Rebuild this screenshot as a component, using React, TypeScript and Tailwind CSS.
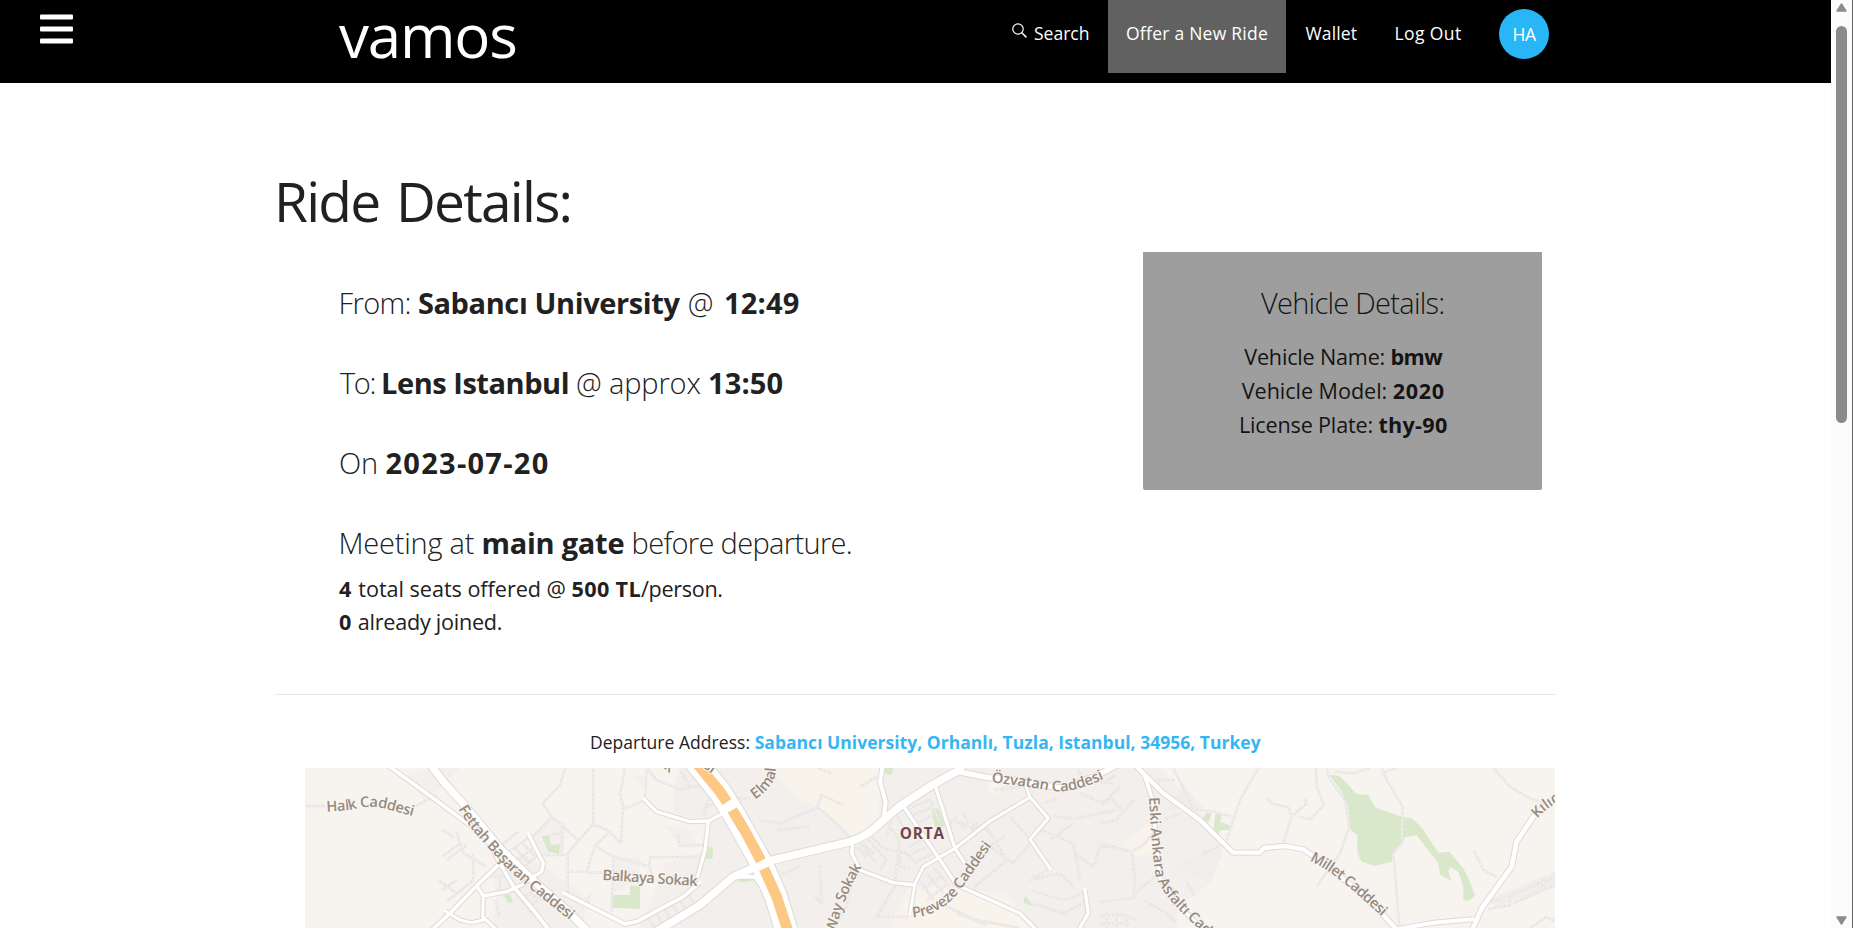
import type { ReactNode } from "react";

type Road = { x: number; d: string; w: number };

const roads: Road[] = [
  { x: 0, w: 22, d: "M385,125 L430,185 L485,245 L600,385 L700,482 L800,570 L870,640" },
  { x: 0, w: 11, d: "M255,130 L400,235 L500,308 L555,350 L580,390 L600,430 L640,500 L700,570 L755,640" },
  { x: 0, w: 11, d: "M600,430 L530,497 L450,580 L385,640" },
  { x: 0, w: 10, d: "M530,497 L550,528 L620,515 L665,495 L690,477 L725,455 L730,430 L685,342" },
  { x: 0, w: 9, d: "M550,530 L548,590 L600,640" },
  { x: 0, w: 9, d: "M435,573 L480,600 L515,608 L550,600" },
  { x: 0, w: 10, d: "M1033,238 L1070,275 L1170,305 L1225,303 L1260,285 L1300,262" },
  { x: 0, w: 10, d: "M1225,305 L1215,390 L1192,472" },
  { x: 0, w: 11, d: "M793,520 L975,612 L1010,605 L1150,530 L1200,488" },
  { x: 1200, w: 23, d: "M-140,640 L0,555 L100,470 L210,422 L450,365 Q500,350 545,305 L600,258 L700,193 L775,152 L800,120" },
  { x: 1200, w: 16, d: "M775,155 L860,172 L960,182 L1090,206 L1195,165 L1260,130" },
  { x: 1200, w: 66, d: "M-30,105 L60,215 L97,275 L185,430 L228,530 L262,640" },
  { x: 1200, w: 12, d: "M100,470 L165,470 L200,520 L240,640" },
  { x: 1200, w: 12, d: "M550,125 L540,185 L557,245 L550,300" },
  { x: 1200, w: 10, d: "M458,372 L455,400 L480,450 L580,488 L645,495" },
  { x: 1200, w: 10, d: "M608,255 L720,420 L770,495 L850,530 L960,580 L1020,640" },
  { x: 1200, w: 10, d: "M705,195 L765,385 L795,430" },
  { x: 1200, w: 9, d: "M630,580 L645,490 L670,440 L765,385 L870,303 L990,232 L975,190" },
  { x: 1200, w: 9, d: "M990,232 L1045,295 L990,358 L1050,445" },
  { x: 1200, w: 10, d: "M1155,510 L1165,580 L1130,640" },
  { x: 2400, w: 13, d: "M95,125 L190,220 L300,300 L398,397 L478,398 L492,384 L555,378 L610,388 L640,408 L760,500 L850,585 L900,640" },
  { x: 2400, w: 11, d: "M135,170 L158,240 L165,330 L178,470 L220,540 L330,650" },
  { x: 2400, w: 12, d: "M890,628 L1000,608 L1118,598" },
  { x: 2400, w: 14, d: "M1112,640 L1145,565 L1235,440 L1250,365 L1300,290 L1380,220" },
];

const lanes: { x: number; d: string }[] = [
  { x: 0, d: "M15,258 H75 M430,190 L470,240 M340,262 L410,225 M795,144 L780,195 L728,250 L755,290 L690,360 M755,290 L835,362 L880,312 V144 M835,362 L800,405 H725 M785,310 V402 M752,342 H784 M803,405 L803,520" },
  { x: 0, d: "M880,312 L930,335 L962,370 L970,260 L960,225 L975,144 M975,265 L1035,240 M930,335 L885,378 L940,410 L1048,440 M885,378 L860,455 L805,455 M862,458 H1000 M940,410 L935,575 M1048,440 L1050,412 L1210,410 M1135,340 L1138,378 L1215,375" },
  { x: 0, d: "M1040,144 L1035,235 M1040,144 L1070,180 L1140,208 L1200,195 M1140,150 L1170,200 M1210,290 L1225,240 L1260,225 M1048,440 L1060,480 M870,520 L860,560" },
  { x: 0, d: "M427,330 L460,352 M470,335 L490,400 L560,440 M427,410 L480,370 M440,420 L500,375 M415,480 L470,520 M425,510 L470,480 M440,545 L520,480 L520,400 M600,380 L655,335 M620,400 L690,350 M640,430 L705,380 M660,450 L720,400 M560,470 H600 V520" },
  { x: 0, d: "M640,380 L690,430 M665,365 L705,410 M680,520 L735,540 M660,540 L720,500 M690,560 L740,520 M640,510 L700,585 M585,540 L600,590 M1040,590 L1065,624 M1065,575 L1095,624 M1090,560 L1120,610 M1115,550 L1145,600 M1140,540 L1165,580 M1165,525 L1190,560" },
  { x: 1200, d: "M10,270 L60,235 L150,235 M350,144 L395,160 M480,200 L530,170 M180,300 L240,310 L355,262 L420,320 L455,360 M350,262 L365,225 L430,255 M230,330 L330,320 M240,465 L300,440 M345,530 L365,550 L360,430" },
  { x: 1200, d: "M500,355 L560,420 L540,450 M510,345 L550,385 L620,400 L650,430 M480,370 L530,430 M560,310 L600,360 L585,480 M575,300 L560,350 M590,285 L620,340 L680,320 M615,270 L690,240 L720,310 M625,290 L695,262 M640,315 L700,285 M625,380 L680,350 M635,400 L695,375 M650,425 L710,395 M600,400 L600,440 L630,445" },
  { x: 1200, d: "M680,460 L730,520 M660,480 L700,540 M700,440 L750,500 M720,420 L760,470 M665,510 L720,470 M680,540 L745,490 M770,290 L740,330 M790,280 L830,350 M750,300 L860,330 L880,350 M780,320 L840,310 M470,380 L500,410 M490,370 L520,400 M460,470 L440,560 L400,624 M590,490 L530,590 H630" },
  { x: 1200, d: "M860,320 L920,420 L820,505 M930,290 L985,350 M870,380 L940,430 L990,370 M830,400 L915,350 M1050,445 L990,480 L1080,460 L1120,500 M1000,320 L1120,370 L1140,480 M990,510 L1090,540 L1150,520 M1000,550 L1090,580 L1150,550 M1050,360 L1120,310 M1060,290 L1130,295 L1250,270" },
  { x: 1200, d: "M1130,144 L1150,180 L1240,190 M1140,220 L1210,250 L1260,200 M1120,400 L1180,440 L1200,380 H1250 M740,560 L830,600 L960,624 M770,580 L860,615 M1030,250 L1070,235 M880,210 L970,200" },
  { x: 2400, d: "M0,245 L40,240 L65,270 M0,310 L50,300 L100,240 M0,372 L95,395 L130,375 L160,340 M95,395 L105,480 L100,535 L0,545 M105,520 L165,470 M165,180 H225 M220,144 L280,268 M475,144 L420,240 L380,360 M280,268 L340,275 L398,290" },
  { x: 2400, d: "M500,232 L515,250 L565,262 L575,290 L550,370 M575,290 L620,250 L615,235 M595,290 L630,298 L672,255 L650,200 L648,144 M680,144 L690,180 L735,240 L748,320 L720,400 L650,500 M305,405 L370,370 M260,485 L285,530 M190,300 L240,280" },
  { x: 2400, d: "M700,155 L760,160 L810,144 M845,144 L860,180 L908,260 L905,370 L880,400 L898,620 M845,160 L890,144 M1120,390 L1150,450 L1190,470 M1180,144 L1230,200 L1290,235 L1330,250 M1165,548 L1230,530 L1230,555 L1165,568 M1200,540 L1365,470 M1240,550 L1365,495 M1330,470 V510 M1290,624 L1340,590 L1365,605" },
  { x: 2400, d: "M0,585 H70 L110,600 M0,610 H90 M20,570 V624 M50,575 V624 M80,590 V624 M130,540 L200,580 L225,605 M20,185 L45,165 M215,500 L240,560" },
];

const greens: { x: number; d: string }[] = [
  { x: 0, d: "M725,348 L748,345 L752,375 L780,372 L778,402 L745,395Z M990,497 H1020 V567 L937,563 L940,525 H990Z M612,525 L630,522 L638,545 L625,550Z M1220,382 H1238 V415 L1217,418Z M1155,520 L1172,515 L1170,530 L1152,535Z" },
  { x: 1200, d: "M555,144 H580 L575,165 L555,162Z M695,270 L715,265 L735,320 L705,322Z M975,525 L1000,558 L970,548Z M95,475 L155,468 L165,480 L130,487Z" },
  { x: 2400, d: "M688,164 L718,168 L740,190 L770,222 L805,225 L825,262 L905,290 L935,295 L965,322 L1015,398 L1048,395 L1090,445 L1110,485 L1125,527 L1105,543 L1090,540 L1090,500 L1075,455 L1050,440 L1045,455 L1055,483 L1020,465 L1015,430 L950,346 L915,352 L905,372 L880,400 L875,425 L825,438 L785,425 L772,400 V345 L752,330 L745,260 L725,215Z" },
  { x: 2400, d: "M318,278 L335,280 L325,308 L305,300Z M347,280 L365,285 L360,305 L395,318 L385,330 L362,330 L354,345 L340,330Z" },
];

const labels: { id: string; x: number; d: string; text: string; len?: number; size?: number }[] = [
  { id: "halk", x: 0, d: "M80,275 L150,270 Q215,252 262,268 L360,294", text: "Halk Caddesi", len: 263 },
  { id: "fettah", x: 0, d: "M475,266 C520,345 570,385 600,423 S740,545 840,625", text: "Fettah Başaran Caddesi", len: 476 },
  { id: "balkaya", x: 0, d: "M907,480 Q1050,489 1230,500", text: "Balkaya Sokak", len: 286 },
  { id: "cut1", x: 0, d: "M1090,144 L1130,176", text: "k" },
  { id: "cut2", x: 0, d: "M1208,142 L1260,180", text: "si" },
  { id: "elmali", x: 1200, d: "M165,238 Q215,205 226,165 L232,100", text: "Elmalı", len: 130 },
  { id: "ozvatan", x: 1200, d: "M874,188 C940,193 990,202 1040,210 C1110,225 1170,195 1240,165", text: "Özvatan Caddesi", len: 346 },
  { id: "way", x: 1200, d: "M408,640 C420,560 455,490 500,415", text: "Way Sokak", len: 216 },
  { id: "preveze", x: 1200, d: "M638,592 C705,590 760,545 792,495 L895,350", text: "Preveze Caddesi", len: 334 },
  { id: "eski", x: 2400, d: "M147,232 C152,330 158,400 166,465 C195,545 270,600 400,720", text: "Eski Ankara Asfaltı Caddesi", len: 560 },
  { id: "millet", x: 2400, d: "M628,422 C690,448 760,510 865,608", text: "Millet Caddesi", len: 276 },
  { id: "kilic", x: 2400, d: "M1312,296 Q1350,250 1440,215", text: "Kılıç Sokak" },
];

function StreetMap() {
  return (
    <svg className="block h-[160px] w-[1250px]" viewBox="15 144 3750 480" preserveAspectRatio="none">
      <rect x="15" y="144" width="3750" height="480" fill="#f7f4ef" />
      <g fill="#f3efed">
        <path d="M1140,144 L1520,144 L1560,215 L1520,240 L1660,355 L1730,310 L1750,144 L2580,144 L2690,265 L2770,370 L2720,500 L2630,560 L2640,640 L2200,640 L2120,520 L1960,510 L1830,500 L1760,640 L1010,640 L1100,430 L1220,390 L1230,305 L1120,280 L1120,210 Z" />
        <path d="M325,170 L380,144 L480,144 L415,210 L370,240Z M690,350 L755,290 L800,310 L790,400 L725,400Z M580,440 L670,400 L860,530 L850,624 L570,624 L590,560Z M940,410 L1020,410 L1020,480 L940,520Z M1095,315 L1165,330 L1190,375 L1140,378Z M995,165 L1035,170 L1030,210Z" />
      </g>
      <path d="M2470,370 L2550,310 L2570,400 L2510,410Z M1940,500 L2010,500 L2190,610 L2210,640 L1760,640 L1830,505Z M2060,180 L2110,185 L2100,220 L2065,218Z M1410,144 L1720,144 L1720,250 L1650,345 L1560,265 L1500,240Z" fill="#f8f4ec" />
      <path d="M2620,440 L2750,375 L2765,405 L2730,490Z M2600,270 L2650,190 L2710,265Z M3560,540 L3765,455 V500 L3590,560Z" fill="#f0edeb" />
      {greens.map((g, i) => (
        <path key={i} d={g.d} transform={`translate(${g.x} 0)`} fill="#d9e8ca" />
      ))}
      {lanes.map((l, i) => (
        <g key={i} transform={`translate(${l.x} 0)`} fill="none" strokeLinejoin="round">
          <path d={l.d} stroke="#e6e4e2" strokeWidth="7" />
          <path d={l.d} stroke="#f6f5f4" strokeWidth="3" strokeDasharray="9 5" />
        </g>
      ))}
      {roads.map((r, i) => (
        <path key={i} d={r.d} transform={`translate(${r.x} 0)`} fill="none" stroke="#dddad8" strokeWidth={r.w + 6} strokeLinejoin="round" />
      ))}
      {roads.map((r, i) => (
        <path key={i} d={r.d} transform={`translate(${r.x} 0)`} fill="none" stroke="#ffffff" strokeWidth={r.w} strokeLinejoin="round" strokeLinecap="round" />
      ))}
      <path d="M1170,105 L1260,215 L1281,246 M1297,270 L1338,338 L1383,422 M1392,446 L1430,530 L1466,640" fill="none" stroke="#fdc883" strokeWidth="32" />
      <g fontFamily="'Open Sans', sans-serif" fontSize="44" fontWeight="600" fill="#978a7e" stroke="#f8f6f3" strokeWidth="5" strokeLinejoin="round" paintOrder="stroke">
        {labels.map((l) => (
          <g key={l.id} transform={`translate(${l.x} 0)`}>
            <path id={l.id} d={l.d} fill="none" stroke="none" />
            <text textLength={l.len}>
              <textPath href={`#${l.id}`} textLength={l.len}>{l.text}</textPath>
            </text>
          </g>
        ))}
        <text x="1799" y="356" fontSize="46" fontWeight="700" fill="#74434c" textLength="133">ORTA</text>
      </g>
    </svg>
  );
}

function NavItem({ className, children }: { className: string; children: ReactNode }) {
  return <a className={`flex h-[73px] shrink-0 pt-[20px] leading-[27px] ${className}`}>{children}</a>;
}

function Header() {
  return (
    <header className="flex h-[83px] bg-black text-[17.5px] whitespace-nowrap text-white">
      <div className="w-[339px] pt-[14px] pl-[40px]">
        <svg width="33" height="30" viewBox="0 0 33 30" fill="#fff">
          <rect x="0" y="0.4" width="33" height="5.2" rx="1" />
          <rect x="0" y="12.4" width="33" height="5.2" rx="1" />
          <rect x="0" y="24.4" width="33" height="5.2" rx="1" />
        </svg>
      </div>
      <div className="w-[655px] text-[60px] leading-[70px] tracking-[-1.19px]">vamos</div>
      <NavItem className="w-[114px] pl-[18px]">
        <svg className="mt-[3px] mr-[7px]" width="15" height="15" viewBox="0 0 15 15" fill="none" stroke="#fff">
          <circle cx="6" cy="6" r="5.2" strokeWidth="1.2" />
          <path d="M9.8 9.8 L14.4 14.4" strokeWidth="1.5" />
        </svg>
        Search
      </NavItem>
      <NavItem className="w-[178px] bg-[#616161] pl-[18px] tracking-[0.25px]">Offer a New Ride</NavItem>
      <NavItem className="w-[90px] pl-[19.5px] tracking-[0.15px]">Wallet</NavItem>
      <NavItem className="w-[123px] pl-[18.5px] tracking-[0.4px]">Log Out</NavItem>
      <div className="mt-[9px] flex h-[50px] w-[50px] items-center justify-center rounded-full bg-[#29b6f6] leading-[50px] tracking-[-0.4px]">HA</div>
    </header>
  );
}

function RideInfo() {
  return (
    <div className="pt-[31px] pl-[65px] text-[29px] leading-[40px] font-light">
      <p className="-ml-[1.5px] mb-[40px]">
        <span className="tracking-[-0.59px]">From: </span>
        <b className="font-bold tracking-[-0.39px]">Sabancı University </b>
        <span className="ml-px mr-[3px]">@ </span>
        <b className="font-bold tracking-[0.17px]">12:49</b>
      </p>
      <p className="mb-[40px]">
        <span className="tracking-[-1.41px]">To: </span>
        <b className="font-bold tracking-[-0.46px]">Lens Istanbul </b>
        <span className="tracking-[-0.15px]">@ approx </span>
        <b className="font-bold tracking-[0.07px]">13:50</b>
      </p>
      <p className="-ml-px mb-[40px]">
        <span className="tracking-[-0.1px]">On </span>
        <b className="font-bold tracking-[1.27px]">2023-07-20</b>
      </p>
      <p className="-ml-[1.5px] mb-[9px]">
        <span className="tracking-[-0.22px]">Meeting at </span>
        <b className="font-bold tracking-[-0.26px]">main gate </b>
        <span className="tracking-[-0.66px]">before departure.</span>
      </p>
      <div className="-ml-px text-[21.6px] leading-[33px] font-normal">
        <p>
          <b className="tracking-[0.67px]">4 </b>
          <span className="tracking-[-0.03px]">total seats offered @ </span>
          <b className="tracking-[0.36px]">500 TL</b>
          <span className="tracking-[-0.33px]">/person.</span>
        </p>
        <p>
          <b className="tracking-[0.42px]">0 </b>
          <span className="tracking-[-0.25px]">already joined.</span>
        </p>
      </div>
    </div>
  );
}

function VehicleCard() {
  return (
    <section className="mr-[14px] h-[238px] w-[399px] rounded-b-[2px] bg-[#9e9e9e] pt-[31px] pl-[1.5px] text-center text-[21.6px] leading-[34px] text-[#141414]">
      <h2 className="mb-[17px] pl-[19px] text-[29px] leading-[40px] font-light tracking-[-0.72px]">Vehicle Details:</h2>
      <p>
        <span className="tracking-[-0.19px]">Vehicle Name: </span>
        <b className="tracking-[-0.53px]">bmw</b>
      </p>
      <p>
        <span className="tracking-[-0.05px]">Vehicle Model: </span>
        <b className="tracking-[0.65px]">2020</b>
      </p>
      <p>
        <span className="tracking-[-0.17px]">License Plate: </span>
        <b className="tracking-[0.27px]">thy-90</b>
      </p>
    </section>
  );
}

function Scrollbar() {
  return (
    <div className="flex h-full w-[22px] shrink-0 flex-col border-r border-[#666] bg-[#fcfcfc] pt-[3px] pb-[3px] pl-[5px]">
      <svg width="11" height="9" viewBox="0 0 11 9"><path d="M5.5 1 L10 8 H1 Z" fill="#8b8b8b" stroke="#8b8b8b" strokeLinejoin="round" strokeWidth="1.4" /></svg>
      <div className="mt-[14px] h-[397px] w-[11px] rounded-full bg-[#8b8b8b]" />
      <svg className="mt-auto" width="11" height="9" viewBox="0 0 11 9"><path d="M5.5 8 L10 1 H1 Z" fill="#8b8b8b" stroke="#8b8b8b" strokeLinejoin="round" strokeWidth="1.4" /></svg>
    </div>
  );
}

export default function App() {
  return (
    <div className="flex h-[928px] w-[1853px] overflow-hidden bg-white font-['Open_Sans',sans-serif] text-[#212121]">
      <div className="w-[1831px] shrink-0">
        <Header />
        <main className="ml-[275px] w-[1281px] pt-[76px] whitespace-nowrap">
          <h1 className="mb-[9px] -ml-px text-[55px] leading-[84px] tracking-[-1.75px] [word-spacing:4px]">Ride Details:</h1>
          <div className="flex h-[443px] items-start justify-between border-b border-[#e8e8e8]">
            <RideInfo />
            <VehicleCard />
          </div>
          <p className="mt-[34px] mb-[12px] pl-[315px] text-[17.5px] leading-[27px]">
            <span className="tracking-[0.04px]">Departure Address: </span>
            <b className="tracking-[0.02px] text-[#35b6f2]">Sabancı University, Orhanlı, Tuzla, Istanbul, 34956, Turkey</b>
          </p>
          <div className="pl-[30px]">
            <StreetMap />
          </div>
        </main>
      </div>
      <Scrollbar />
    </div>
  );
}
